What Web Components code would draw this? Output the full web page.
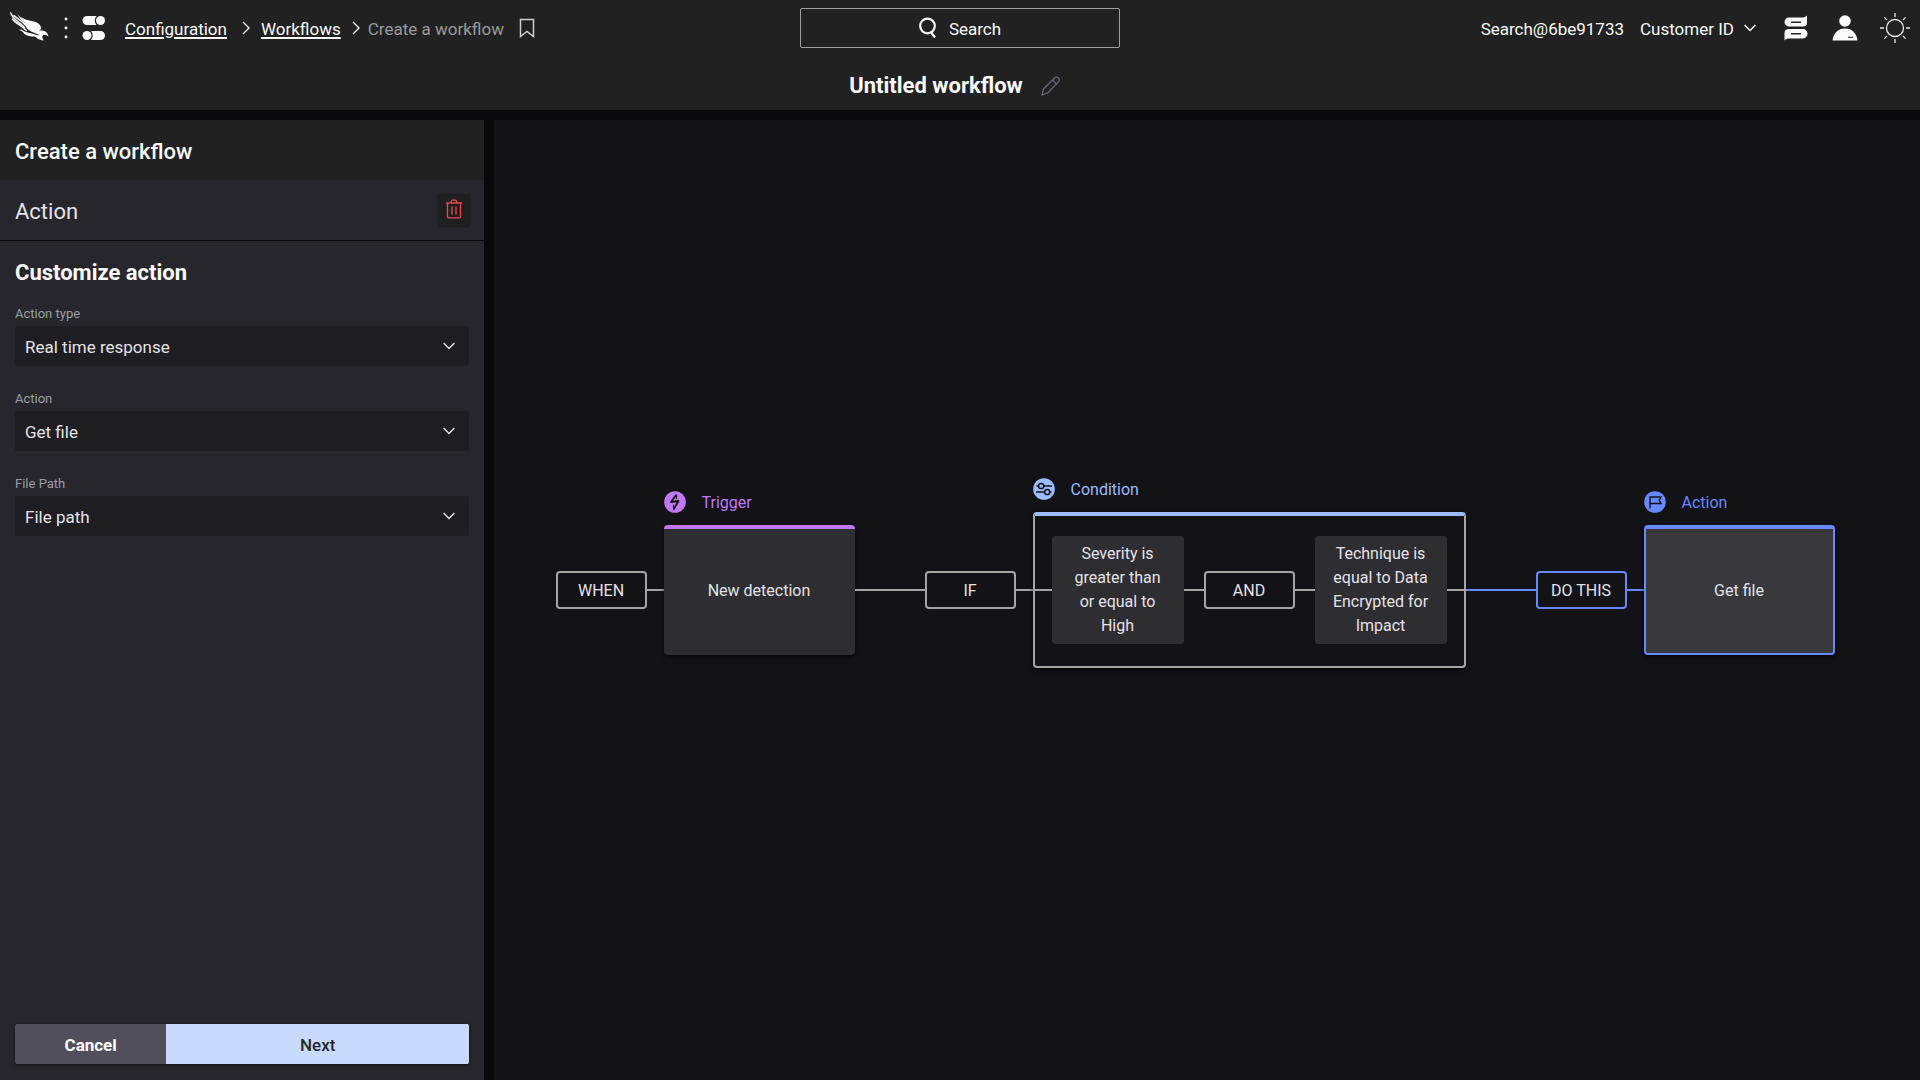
<!DOCTYPE html>
<html lang="en">
<head>
<meta charset="utf-8">
<title>Create a workflow</title>
<style>
  :root {
    --bar: #212121;
    --panel: #27262c;
    --field: #1e1d21;
    --canvas: #131217;
    --gutter: #09090b;
    --text: #e4e3e8;
    --muted: #9d9da3;
    --line: #a6a5a4;
    --purple: #c178f7;
    --sky: #99bdff;
    --blue: #6689ff;
  }
  html, body { height: 100%; margin: 0; }
  body {
    background: var(--gutter);
    color: var(--text);
    font: 17px/24px Roboto, "Liberation Sans", sans-serif;
  }
</style>
</head>
<body>
<workflow-app></workflow-app>

<script>
const define = (name, html, setup) => {
  const template = document.createElement('template');
  template.innerHTML = html;
  customElements.define(name, class extends HTMLElement {
    constructor() {
      super();
      this.attachShadow({ mode: 'open' }).append(template.content.cloneNode(true));
    }
    connectedCallback() {
      if (setup && !this.ready) { this.ready = true; setup(this, this.shadowRoot); }
    }
  });
};

const ICONS = {
  falcon: [40, 32, `<g fill="#fafafa"><path d="M7 1.500C10 6.500 17 8 24 9.500c5 1.200 7 4 7.300 7.500l-2.300 1.500c4.500-.5 8.500.5 9.500 6l-3-1.800-2.500.3-.8 2 1.300 3.800-5.500-1.800-3.500-3 5-1-6-2.500C18 18.500 15.500 15.500 14.500 10.500 12 8.500 9 6 7 1.500z"/><path d="M9 17.500l3 .2c4 3.500 11 3 17 6.300l-5 .5c-6 0-10-2-11-4.500z"/></g><g fill="none" stroke="#fafafa" stroke-width="1.500" stroke-linecap="round"><path d="M.8 1C3 8 9 9.500 14.500 15.500"/><path d="M2.500 7c3 4.500 9 6 14 11.500"/><path d="M4 3.500c4 4 8 5 11.500 9.500"/></g>`],
  dots: [4, 22, `<g fill="#fafafa"><circle cx="2" cy="2" r="1.4"/><circle cx="2" cy="11" r="1.4"/><circle cx="2" cy="20" r="1.4"/></g>`],
  toggles: [24, 26, `<g fill="#fafafa"><path d="M5 1h9.500c-2.200 2.500-2.200 6.500 0 9H5a4.500 4.500 0 0 1 0-9z"/><circle cx="18.500" cy="5.500" r="4.500"/><circle cx="5" cy="20.500" r="4.500"/><path d="M18.500 16H9c2.200 2.500 2.200 6.500 0 9h9.500a4.500 4.500 0 0 0 0-9z"/></g>`],
  right: [8, 14, `<path d="M1 1l6 6-6 6" fill="none" stroke="currentColor" stroke-width="1.300"/>`],
  down: [12, 8, `<path d="M.6 1L6 6.500 11.400 1" fill="none" stroke="currentColor" stroke-width="1.400"/>`],
  bookmark: [16, 20, `<path d="M1.500 1.500h13v17L8 13.500l-6.500 5z" fill="none" stroke="#cfcfcf" stroke-width="1.500"/>`],
  search: [18, 22, `<g fill="none" stroke="#fafafa" stroke-width="2.200"><circle cx="8.500" cy="9" r="7.300"/><path d="M11.500 14.500L16 20.500"/></g>`],
  pencil: [20, 20, `<g fill="none" stroke="#6b6979" stroke-width="1.300" stroke-linejoin="round"><path d="M1 19l1.500-6L13.500 2c1.200-1.200 2.800-1.200 3.900 0 1.100 1.100 1.200 2.700 0 3.900L6.500 17 1 19z"/><path d="M11.500 4l4 4"/></g>`],
  chat: [26, 26, `<path fill="#fafafa" d="M5 2.500h13c2 0 3.500-.5 5-2V8c0 2-1.500 3.500-4 3.500H5C2.500 11.500.5 9.500.5 7S2.500 2.500 5 2.500z"/><path fill="#fafafa" d="M19 14H5C2 14 .5 15.500.5 18v7.500c1-1.500 3-2 5-2H19c2.500 0 4.500-2 4.500-4.700S21.500 14 19 14z"/><path d="M7 7.200h10M7 18.700h10" stroke="#212121" stroke-width="1.400"/>`],
  user: [26, 26, `<circle cx="13" cy="6" r="5.800" fill="#fafafa"/><path fill="#fafafa" d="M.5 25.500C1.500 18 6 13.500 13 13.500S24.500 18 25.500 25.500z"/><path d="M16 22.300h5" stroke="#212121" stroke-width="1"/>`],
  sun: [30, 30, `<g fill="none" stroke="#e8e8e8" stroke-width="1.300"><circle cx="15" cy="15" r="8.500"/><path d="M15 0v4M15 26v4M0 15h4M26 15h4M4.400 4.400l2.700 2.700M22.900 22.900l2.700 2.700M4.400 25.600l2.700-2.700M22.900 7.100l2.700-2.700"/></g>`],
  trash: [16, 20, `<g fill="none" stroke="#e8484f" stroke-width="1.300"><path d="M0 4h16M1.500 4v13.500c0 .8.500 1.300 1.300 1.300h10.400c.8 0 1.300-.5 1.300-1.300V4M5 4c0-2 1-3.200 3-3.200S11 2 11 4M6 7.500v8M10 7.500v8"/></g>`],
  bolt: [22, 22, `<circle cx="11" cy="11" r="10.800" fill="#c178f7"/><path d="M12.500 3.500L7 11l7.500-1L9.500 18.500" fill="none" stroke="#131217" stroke-width="1.800" stroke-linejoin="round"/><path d="M12.500 3.500v4.800M9.500 18.500v-4.800" fill="none" stroke="#131217" stroke-width="1"/>`],
  sliders: [22, 22, `<circle cx="11" cy="11" r="10.800" fill="#99bdff"/><g fill="none" stroke="#131217" stroke-width="1.500"><path d="M3.500 8h2M11 8h8M3 14h8.500M17 14h1.500"/><circle cx="8.200" cy="8" r="2.600"/><circle cx="14.200" cy="14" r="2.600"/></g>`],
  flag: [22, 22, `<circle cx="11" cy="11" r="10.800" fill="#6689ff"/><path d="M6 17.500V6h11l-1.800 3.300L17 12.500H6" fill="none" stroke="#131217" stroke-width="1.400"/>`]
};

define('ui-icon', `<style>:host{display:inline-flex;flex:none}svg{display:block}</style>`, (el, root) => {
  const [w, h, body] = ICONS[el.getAttribute('name')];
  root.innerHTML += `<svg width="${w}" height="${h}" viewBox="0 0 ${w} ${h}" aria-hidden="true">${body}</svg>`;
});

define('crumb-trail', `
<style>
  :host { display: block; }
  nav { display: flex; align-items: center; color: #fafafa; }
  a, span { padding-top: 2px; }
  a { color: inherit; text-decoration-thickness: 2px; text-underline-offset: 2px; }
  ui-icon { margin: 0 11px 0 15px; }
  ui-icon.last { margin: 0 8px 0 11px; }
  span { color: #9a9a9d; margin-right: 15px; }
  button { display: flex; padding: 0; border: 0; background: none; }
  button ui-icon { margin: 0; }
</style>
<nav aria-label="Breadcrumb">
  <a href="#configuration">Configuration</a><ui-icon name="right"></ui-icon>
  <a href="#workflows">Workflows</a><ui-icon class="last" name="right"></ui-icon>
  <span>Create a workflow</span>
  <button aria-label="Bookmark"><ui-icon name="bookmark"></ui-icon></button>
</nav>`);

define('app-header', `
<style>
  :host { display: block; background: var(--bar); color: #fafafa; }
  .top { display: grid; grid-template-columns: 1fr 320px 1fr; align-items: center; height: 56px; }
  .left, .right { display: flex; align-items: center; }
  .left { padding-left: 10px; }
  .left > ui-icon { margin-right: 14px; }
  crumb-trail { margin-left: 5px; }
  .right { justify-content: flex-end; padding-right: 10px; }
  span { padding-top: 2px; }
  button { display: flex; align-items: center; padding: 0; border: 0; background: none; color: inherit; font: inherit; }
  .search { justify-content: center; gap: 12px; height: 40px; border: 1px solid #9b9fa3; border-radius: 2px; }
  .customer { gap: 10px; margin: 0 28px 0 16px; }
  .icons { display: flex; align-items: center; gap: 22px; }
  .title { display: flex; justify-content: center; align-items: center; gap: 18px; height: 54px; box-sizing: border-box; padding: 5px 10px 0 0; }
  h1 { margin: 0; font-size: 22px; font-weight: 700; line-height: 28px; }
</style>
<header>
  <div class="top">
    <div class="left">
      <ui-icon name="falcon"></ui-icon><ui-icon name="dots"></ui-icon><ui-icon name="toggles"></ui-icon>
      <crumb-trail></crumb-trail>
    </div>
    <button class="search"><ui-icon name="search"></ui-icon><span>Search</span></button>
    <div class="right">
      <span>Search@6be91733</span>
      <button class="customer"><span>Customer ID</span><ui-icon name="down"></ui-icon></button>
      <div class="icons">
        <button aria-label="Messages"><ui-icon name="chat"></ui-icon></button>
        <button aria-label="Account"><ui-icon name="user"></ui-icon></button>
        <button aria-label="Theme"><ui-icon name="sun"></ui-icon></button>
      </div>
    </div>
  </div>
  <div class="title"><h1>Untitled workflow</h1><button aria-label="Rename"><ui-icon name="pencil"></ui-icon></button></div>
</header>`);

define('select-field', `
<style>
  :host { display: block; }
  label { display: block; margin-bottom: 3px; color: var(--muted); font-size: 13px; line-height: 18px; }
  .box { display: grid; align-items: center; }
  .box > * { grid-area: 1 / 1; }
  ui-icon { justify-self: end; margin-right: 14px; pointer-events: none; }
  select { appearance: none; width: 100%; height: 40px; padding: 2px 36px 0 10px; border: 0; border-radius: 3px;
           background: var(--field); color: var(--text); font: inherit; }
</style>
<label for="s"></label>
<div class="box"><select id="s"><option></option></select><ui-icon name="down"></ui-icon></div>`,
(el, root) => {
  root.querySelector('label').textContent = el.getAttribute('label');
  root.querySelector('option').textContent = el.getAttribute('value');
});

define('side-panel', `
<style>
  :host { display: flex; flex-direction: column; background: var(--panel); }
  h2, h3, h4 { margin: 0; font-size: 22px; line-height: 28px; }
  h2 { padding: 18px 15px 14px; background: var(--bar); color: #fafafa; font-weight: 500; }
  .section { display: flex; align-items: center; justify-content: space-between; height: 60px; padding: 0 14px 0 15px; border-bottom: 1px solid #08080a; }
  h3 { padding-top: 4px; font-weight: 400; }
  .trash { display: flex; justify-content: center; align-items: center; width: 32px; height: 32px; padding: 0 0 2px; border: 0; border-radius: 3px; background: #1f1f20; box-shadow: 0 1px 2px #0006; }
  .body { flex: 1; display: flex; flex-direction: column; gap: 24px; padding: 18px 15px 0; }
  h4 { color: #fafafa; font-weight: 700; margin-bottom: -6px; }
  .actions { display: grid; grid-template-columns: 1fr 2fr; margin: 16px 15px; border-radius: 2px; overflow: hidden; box-shadow: 0 1px 3px #0009; }
  .actions button { height: 40px; padding: 2px 0 0; border: 0; background: #504f5b; color: #fff; font: inherit; font-weight: 700; }
  .actions .next { background: #c8dbff; color: #27262c; font-weight: 500; }
</style>
<h2>Create a workflow</h2>
<div class="section"><h3>Action</h3><button class="trash" aria-label="Delete action"><ui-icon name="trash"></ui-icon></button></div>
<div class="body"><h4>Customize action</h4><slot></slot></div>
<div class="actions"><button>Cancel</button><button class="next">Next</button></div>`);

define('flow-line', `
<style>
  :host { display: block; height: 2px; width: 17px; background: var(--tone, var(--line)); }
  :host([size=medium]) { width: 20px; }
  :host([size=long]) { width: 70px; }
</style>`);

define('flow-gate', `
<style>
  :host { display: flex; justify-content: center; align-items: center; box-sizing: border-box; width: 91px; height: 38px;
          padding-top: 2px; border: 2px solid var(--tone, var(--line)); border-radius: 4px; }
</style><slot></slot>`);

define('flow-step', `
<style>
  :host { display: flex; flex-direction: column; }
  .label, .foot { height: 34px; }
  .label { display: flex; align-items: flex-start; gap: 16px; color: var(--accent); line-height: 24px; }
  .card { display: flex; justify-content: center; align-items: center; box-sizing: border-box; width: 191px; height: 130px; padding-bottom: 2px;
          border-top: 4px solid var(--accent); border-radius: 4px; background: #2e2d32; box-shadow: 0 2px 5px #0009; }
  :host([kind=selected]) .card { border: 2px solid var(--accent); border-top-width: 4px; padding-bottom: 0; background: #39383d; }
  :host([kind=group]) .card { width: auto; height: 156px; border: 2px solid var(--line); border-top: 4px solid var(--accent); background: none; }
</style>
<div class="label"><span></span></div>
<div class="card"><slot></slot></div>
<div class="foot"></div>`, (el, root) => {
  const icon = document.createElement('ui-icon');
  icon.setAttribute('name', el.getAttribute('icon'));
  root.querySelector('.label').prepend(icon);
  root.querySelector('span').textContent = el.getAttribute('label');
});

define('flow-rule', `
<style>
  :host { display: block; box-sizing: border-box; width: 132px; padding: 6px 16px; border-radius: 3px; background: #2e2d32; text-align: center; }
</style><slot></slot>`);

define('flow-canvas', `
<style>
  :host { display: flex; justify-content: center; align-items: center; box-sizing: border-box; padding: 0 24px 20px 0; background: var(--canvas); font-size: 16px; line-height: 24px; }
  .purple { --accent: var(--purple); }
  .sky { --accent: var(--sky); }
  .blue { --accent: var(--blue); --tone: var(--blue); }
  flow-line, flow-gate, flow-step, flow-rule { flex: none; }
</style>
<flow-gate>WHEN</flow-gate><flow-line></flow-line>
<flow-step class="purple" icon="bolt" label="Trigger">New detection</flow-step>
<flow-line size="long"></flow-line><flow-gate>IF</flow-gate><flow-line></flow-line>
<flow-step class="sky" kind="group" icon="sliders" label="Condition">
  <flow-line></flow-line><flow-rule>Severity is greater than or equal to High</flow-rule><flow-line size="medium"></flow-line><flow-gate>AND</flow-gate><flow-line size="medium"></flow-line><flow-rule>Technique is equal to Data Encrypted for Impact</flow-rule><flow-line></flow-line>
</flow-step>
<flow-line class="blue" size="long"></flow-line><flow-gate class="blue">DO THIS</flow-gate><flow-line class="blue"></flow-line>
<flow-step class="blue" kind="selected" icon="flag" label="Action">Get file</flow-step>`);

define('workflow-app', `
<style>
  :host { display: flex; flex-direction: column; gap: 10px; height: 100vh; }
  main { flex: 1; min-height: 0; display: grid; grid-template-columns: 484px 1fr; gap: 10px; }
</style>
<app-header></app-header>
<main>
  <side-panel>
    <select-field label="Action type" value="Real time response"></select-field>
    <select-field label="Action" value="Get file"></select-field>
    <select-field label="File Path" value="File path"></select-field>
  </side-panel>
  <flow-canvas></flow-canvas>
</main>`);
</script>
</body>
</html>
